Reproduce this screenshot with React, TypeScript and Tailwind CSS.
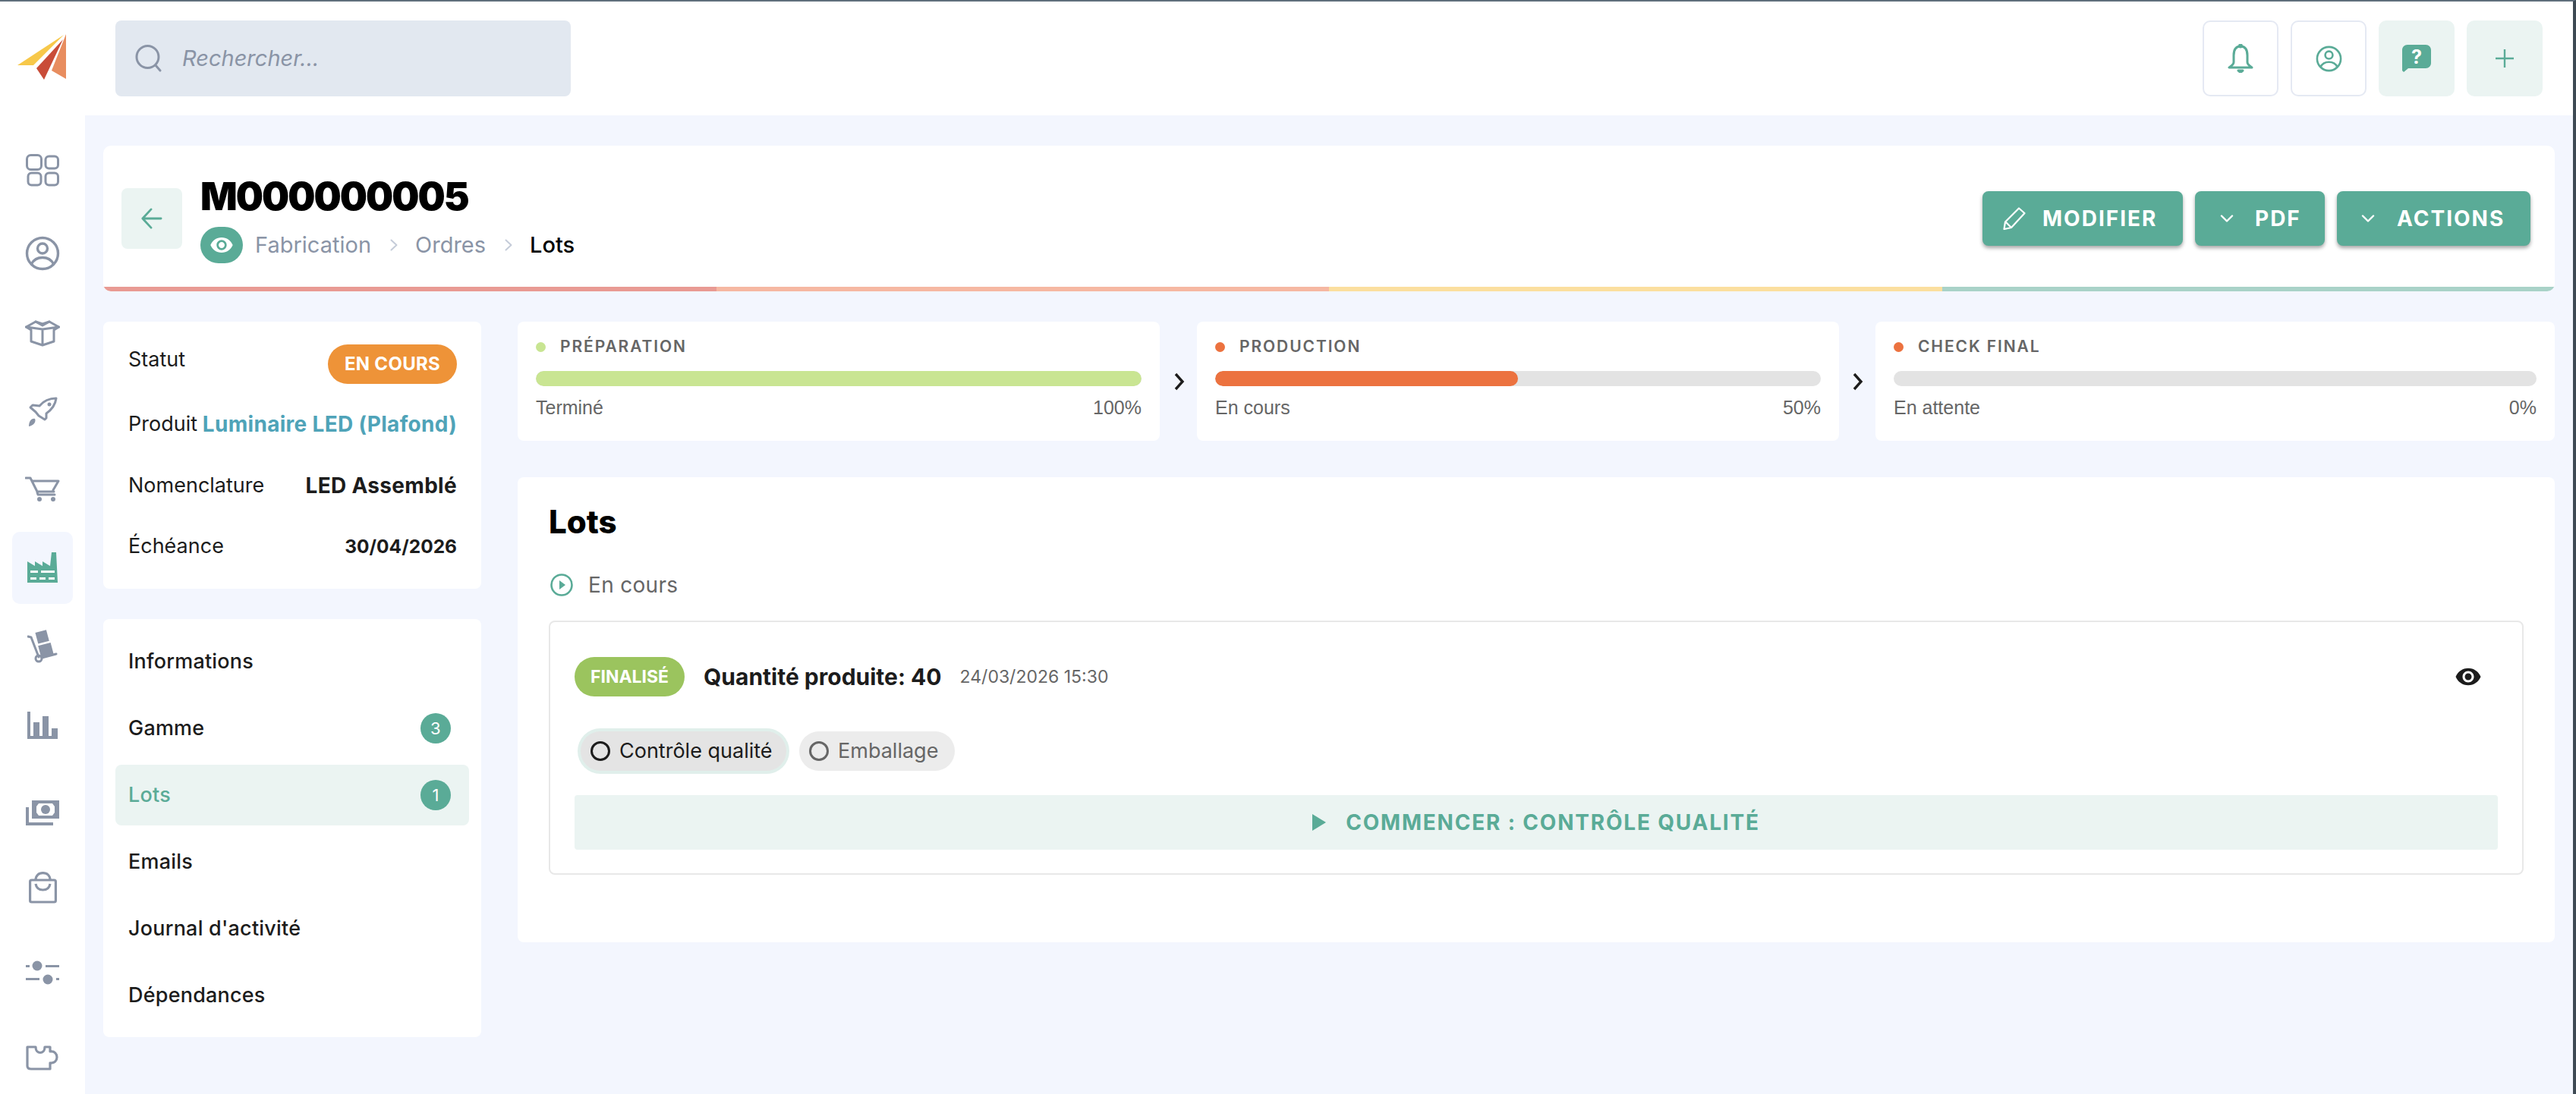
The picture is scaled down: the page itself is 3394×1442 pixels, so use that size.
import React from "react";

const INK = "#8a94a6";
const TEAL = "#5aab97";
const EYE = "M12 4.5C7 4.5 2.73 7.61 1 12c1.73 4.39 6 7.5 11 7.5s9.27-3.11 11-7.5c-1.73-4.39-6-7.5-11-7.5zM12 17c-2.76 0-5-2.24-5-5s2.24-5 5-5 5 2.24 5 5-2.24 5-5 5zm0-8c-1.66 0-3 1.34-3 3s1.34 3 3 3 3-1.34 3-3-1.34-3-3-3z";

function Logo() {
  return (
    <svg width="64" height="60" viewBox="0 0 64 60">
      <polygon points="61,1 0,41 21,41" fill="#f7c84a" />
      <polygon points="60,7 25,45 35,60 " fill="#c94c38" />
      <polygon points="64,0 64,59 45,48" fill="#e88d5f" />
    </svg>
  );
}
const stroke = { fill: "none", stroke: INK, strokeWidth: 3, strokeLinejoin: "round" as const, strokeLinecap: "round" as const };

function GridI() {
  return (
    <svg width="44" height="43" viewBox="0 0 44 43" {...stroke}>
      <rect x="1.5" y="1.5" width="19" height="19" rx="5" />
      <rect x="26" y="3" width="16.5" height="16" rx="4.5" />
      <rect x="3" y="25" width="17" height="16" rx="4.5" />
      <rect x="26" y="25" width="16.5" height="16" rx="4.5" />
    </svg>
  );
}
function UserI({ color = INK, size = 46 }: { color?: string; size?: number }) {
  return (
    <svg width={size} height={size} viewBox="0 0 46 46" fill="none" stroke={color} strokeWidth="3.4">
      <circle cx="23" cy="23" r="20.5" />
      <circle cx="23" cy="16.5" r="6.5" />
      <path d="M8.5 37c3-6 8.5-8.5 14.5-8.5S34.500 31 37.500 37" />
    </svg>
  );
}
function BoxI() {
  return (
    <svg width="46" height="36" viewBox="0 0 46 36" {...stroke}>
      <path d="M23 13 L1.500 10 L8 14 V29 L23 34 L38 29 V14 L44.500 10 L23 13 V34" />
      <path d="M1.500 10 L14 3 L23 6 L32 3 L44.500 10" />
      <path d="M14 3 L23 8 L32 3" />
    </svg>
  );
}
function RocketI() {
  return (
    <svg width="40" height="40" viewBox="0 0 40 40">
      <path d="M38 2 C28 2 21 6 16 12 L7 11 L4 14 L11 20 L15 25 L23 30 L25 28 L25 22 C32 17 37 10 38 2Z" fill="none" stroke={INK} strokeWidth="3" strokeLinejoin="round" />
      <circle cx="29" cy="10" r="2.500" fill={INK} />
      <path d="M2 39 C2 33 5 28 10 29 C12 33 8 38 2 39Z" fill={INK} />
    </svg>
  );
}
function CartI() {
  return (
    <svg width="46" height="34" viewBox="0 0 46 34">
      <path d="M1 2 H7 L16 20 H38 M10 6 H44 L37 18 M16 21 L17 24 H39" fill="none" stroke={INK} strokeWidth="3" strokeLinecap="round" strokeLinejoin="round" />
      <circle cx="19" cy="30" r="3" fill={INK} />
      <circle cx="37" cy="30" r="3" fill={INK} />
    </svg>
  );
}
function FactoryI() {
  return (
    <svg width="40" height="40" viewBox="0 0 40 40">
      <path d="M0 12 L10 18 V12 L20 18 V12 L30 18 L32 0 H38 L40 40 H0Z" fill={TEAL} />
      <path d="M4 24 H14 V27 H4Z M18 24 H28 V27 H18Z M28 24 H36 V27 H28Z M4 33 H12 V36 H4Z M16 33 H24 V36 H16Z M28 33 H36 V36 H28Z" fill="#fff" />
    </svg>
  );
}
function TruckI() {
  return (
    <svg width="40" height="44" viewBox="0 0 40 44">
      <g fill={INK}>
        <rect x="12" y="2" width="15" height="15" transform="rotate(-15 19 9)" />
        <rect x="16" y="19" width="17" height="16" transform="rotate(-15 24 27)" />
      </g>
      <path d="M1 9 L5 10 L15 36" fill="none" stroke={INK} strokeWidth="3" strokeLinecap="round" />
      <path d="M19 37 L38 32" fill="none" stroke={INK} strokeWidth="3" strokeLinecap="round" />
      <circle cx="15" cy="38" r="4" fill="none" stroke={INK} strokeWidth="3" />
    </svg>
  );
}
function BarsI() {
  return (
    <svg width="40" height="36" viewBox="0 0 40 36" fill={INK}>
      <path d="M0 0 H4 V32 H8 V14 H16 V32 H20 V6 H28 V32 H32 V22 H40 V36 H0Z" />
    </svg>
  );
}
function MoneyI() {
  return (
    <svg width="44" height="33" viewBox="0 0 44 33">
      <path fillRule="evenodd" d="M8 0 H44 V24 H8Z M14 8 L17 4 H35 L38 8 V16 L35 20 H17 L14 16Z" fill={INK} />
      <ellipse cx="26" cy="12" rx="6" ry="6" fill={INK} />
      <path d="M0 9 H4 V29 H36 V33 H0Z" fill={INK} />
    </svg>
  );
}
function BagI() {
  return (
    <svg width="37" height="42" viewBox="0 0 37 42" fill="none" stroke={INK} strokeWidth="3.200">
      <rect x="1.600" y="11" width="33.800" height="29" rx="2" />
      <path d="M9 11 C9 5 13 1.600 18.500 1.600 S28 5 28 11" />
      <path d="M9 16 C10 22 14 24 18.500 24 S27 22 28 16" />
    </svg>
  );
}
function SlidersI() {
  return (
    <svg width="44" height="32" viewBox="0 0 44 32" fill={INK}>
      <rect x="0" y="6" width="5" height="3" />
      <ellipse cx="15" cy="7" rx="6.500" ry="6.500" />
      <rect x="26" y="6" width="18" height="3" />
      <rect x="0" y="23" width="18" height="3" />
      <ellipse cx="29" cy="25" rx="6.500" ry="6.500" />
      <rect x="40" y="23" width="4" height="3" />
    </svg>
  );
}
function PuzzleI() {
  return (
    <svg width="44" height="33" viewBox="0 0 44 33" fill="none" stroke={INK} strokeWidth="3.200" strokeLinejoin="round">
      <path d="M2 2 H13 C13 12 25 12 25 2 H32 V8 C44 6 44 25 32 23 V31 H7 C3 31 2 29 2 27Z" />
    </svg>
  );
}
function Chev({ w = 18, h = 10, color = "#fff" }: { w?: number; h?: number; color?: string }) {
  return (
    <svg width={w} height={h} viewBox="0 0 18 10" fill="none" stroke={color} strokeWidth="2.400" strokeLinecap="round" strokeLinejoin="round">
      <path d="M2 1.500 L9 8.500 L16 1.500" />
    </svg>
  );
}
function Crumb() {
  return (
    <svg width="10" height="16" viewBox="0 0 10 16" fill="none" stroke="#c5ccd9" strokeWidth="2" strokeLinecap="round" strokeLinejoin="round">
      <path d="M1.500 1.500 L8.500 8 L1.500 14.500" />
    </svg>
  );
}
function StepChev() {
  return (
    <svg width="16" height="24" viewBox="0 0 16 24" fill="none" stroke="#1c1c1c" strokeWidth="3.400" strokeLinejoin="miter">
      <path d="M3 2 L12 12 L3 22" />
    </svg>
  );
}

function Step({ color, label, status, pct, fill, bar, cls }: { color: string; label: string; status: string; pct: string; fill: number; bar: string; cls: string }) {
  return (
    <div className={`${cls} h-[157px] bg-white rounded-[8px] px-[24px] pt-[22px]`}>
      <div className="flex items-center h-[22px]">
        <span className="w-[13px] h-[13px] rounded-full mr-[19px]" style={{ background: color }} />
        <span className="text-[21px] font-semibold tracking-[1.900px] text-[#666] leading-[22px]">{label}</span>
      </div>
      <div className="h-[20px] rounded-full bg-[#e3e3e3] mt-[21px] overflow-hidden">
        <div className="h-full rounded-full" style={{ width: `${fill}%`, background: bar }} />
      </div>
      <div className="flex justify-between mt-[14px] text-[25px] leading-[28px] text-[#666] font-[family-name:'Liberation_Sans',sans-serif]">
        <span>{status}</span>
        <span>{pct}</span>
      </div>
    </div>
  );
}

export default function App() {
  return (
    <div className="w-[3394px] h-[1442px] overflow-hidden bg-white border-t-[2px] border-r-[4px] border-t-[#5f6f7c] border-r-[#3e4a54] font-[family-name:Inter,sans-serif] text-[#1c1c1c] flex flex-col">
      <header className="h-[150px] flex items-center shrink-0">
        <div className="w-[112px] pl-[23px] pb-[4px] shrink-0"><Logo /></div>
        <div className="ml-[40px] w-[600px] h-[100px] bg-[#e2e8f0] rounded-[8px] flex items-center pl-[26px]">
          <svg width="36" height="36" viewBox="0 0 36 36" fill="none" stroke={INK} strokeWidth="3" strokeLinecap="round">
            <circle cx="16.500" cy="16" r="14.500" />
            <path d="M27 27 L33 34" />
          </svg>
          <span className="ml-[26px] text-[29px] italic text-[#8a94a6]">Rechercher...</span>
        </div>
        <div className="ml-auto mr-[40px] flex gap-[16px]">
          <div className="w-[100px] h-[100px] rounded-[10px] border-2 border-[#e5e9f3] flex items-center justify-center">
            <svg width="34" height="38" viewBox="0 0 34 38" fill="none" stroke={TEAL} strokeWidth="3" strokeLinejoin="round">
              <path d="M17 3 C10 3 8 9 8 15 V24 C8 27 5 29 2 31 H32 C29 29 26 27 26 24 V15 C26 9 24 3 17 3Z" />
              <circle cx="17" cy="2.500" r="1.500" fill={TEAL} />
              <path d="M14 35 H20 L17 37.500Z" fill={TEAL} />
            </svg>
          </div>
          <div className="w-[100px] h-[100px] rounded-[10px] border-2 border-[#e5e9f3] flex items-center justify-center">
            <UserI color={TEAL} size={35} />
          </div>
          <div className="w-[100px] h-[100px] rounded-[10px] bg-[#ebf4f2] flex items-center justify-center">
            <svg width="38" height="36" viewBox="0 0 38 36">
              <path d="M7 0 H31 C35 0 38 3 38 7 V24 C38 28 35 31 31 31 H8 L2 36 L0 34 V7 C0 3 3 0 7 0Z" fill={TEAL} />
              <text x="19" y="25" textAnchor="middle" fontSize="25" fontWeight="700" fill="#fff" fontFamily="Inter">?</text>
            </svg>
          </div>
          <div className="w-[100px] h-[100px] rounded-[10px] bg-[#ebf4f2] flex items-center justify-center">
            <svg width="26" height="26" viewBox="0 0 26 26" stroke={TEAL} strokeWidth="2.400"><path d="M13 1 V25 M1 13 H25" /></svg>
          </div>
        </div>
      </header>

      <div className="flex flex-1 min-h-0">
        <aside className="w-[112px] shrink-0 flex flex-col items-center">
          <div className="w-[80px] h-[96px] mt-[25px] flex items-center justify-center"><GridI /></div>
          <div className="w-[80px] h-[96px] mt-[14px] flex items-center justify-center"><UserI /></div>
          <div className="w-[80px] h-[96px] mt-[9px] flex items-center justify-center"><BoxI /></div>
          <div className="w-[80px] h-[96px] mt-[9px] flex items-center justify-center"><RocketI /></div>
          <div className="w-[80px] h-[96px] mt-[6px] flex items-center justify-center"><CartI /></div>
          <div className="w-[80px] h-[96px] mt-[8px] rounded-[10px] bg-[#f3f6fe] flex items-center justify-center"><FactoryI /></div>
          <div className="w-[80px] h-[96px] mt-[8px] flex items-center justify-center"><TruckI /></div>
          <div className="w-[80px] h-[96px] mt-[9px] flex items-center justify-center"><BarsI /></div>
          <div className="w-[80px] h-[96px] mt-[20px] flex items-center justify-center"><MoneyI /></div>
          <div className="w-[80px] h-[96px] mt-[3px] flex items-center justify-center"><BagI /></div>
          <div className="w-[80px] h-[96px] mt-[16px] flex items-center justify-center"><SlidersI /></div>
          <div className="w-[80px] h-[96px] mt-[17px] flex items-center justify-center"><PuzzleI /></div>
        </aside>

        <main className="flex-1 bg-[#f3f6fe] pt-[40px] px-[24px] min-w-0">
          <section className="h-[192px] bg-white rounded-[10px] overflow-hidden flex flex-col">
            <div className="flex-1 flex items-center pl-[24px] pr-[32px] pt-[6px]">
              <div className="w-[80px] h-[80px] rounded-[8px] bg-[#ebf4f2] flex items-center justify-center shrink-0">
                <svg width="28" height="28" viewBox="0 0 30 30" fill="none" stroke={TEAL} strokeWidth="3" strokeLinecap="round" strokeLinejoin="round">
                  <path d="M14 2 L2 15 L14 28 M2 15 H28" />
                </svg>
              </div>
              <div className="ml-[24px] flex flex-col">
                <h1 className="text-[51px] leading-[60px] font-black text-black tracking-[-2px]">M000000005</h1>
                <div className="flex items-center h-[48px] mt-[10px]">
                  <span className="w-[56px] h-[48px] rounded-full flex items-center justify-center" style={{ background: TEAL }}>
                    <svg width="32" height="32" viewBox="0 0 24 24" fill="#fff"><path d={EYE} /></svg>
                  </span>
                  <span className="ml-[16px] text-[29px] text-[#8a94a6]">Fabrication</span>
                  <span className="ml-[25px]"><Crumb /></span>
                  <span className="ml-[23px] text-[29px] text-[#8a94a6]">Ordres</span>
                  <span className="ml-[25px]"><Crumb /></span>
                  <span className="ml-[23px] text-[29px] font-medium text-black">Lots</span>
                </div>
              </div>
              <div className="ml-auto flex gap-[16px] text-white font-bold text-[28px] tracking-[2px]">
                <button className="w-[264px] h-[72px] rounded-[8px] bg-[#5aab97] shadow-[0_3px_5px_rgba(0,0,0,0.35)] flex items-center pl-[27px]">
                  <svg width="30" height="30" viewBox="0 0 30 30" fill="none" stroke="#fff" strokeWidth="2.200" strokeLinejoin="round">
                    <path d="M21 1.500 L28.500 8 L11 27 L1.500 29 L3 19.500Z M3.500 19.500 L10.500 26.500" />
                  </svg>
                  <span className="ml-[22px]">MODIFIER</span>
                </button>
                <button className="w-[171px] h-[72px] rounded-[8px] bg-[#5aab97] shadow-[0_3px_5px_rgba(0,0,0,0.35)] flex items-center pl-[33px]">
                  <Chev />
                  <span className="ml-[28px]">PDF</span>
                </button>
                <button className="w-[255px] h-[72px] rounded-[8px] bg-[#5aab97] shadow-[0_3px_5px_rgba(0,0,0,0.35)] flex items-center pl-[32px]">
                  <Chev />
                  <span className="ml-[29px]">ACTIONS</span>
                </button>
              </div>
            </div>
            <div className="h-[6px] flex shrink-0">
              <div className="flex-1 bg-[#e99a93]" />
              <div className="flex-1 bg-[#f6b8a2]" />
              <div className="flex-1 bg-[#fbdf9f]" />
              <div className="flex-1 bg-[#a9d2c8]" />
            </div>
          </section>

          <div className="flex mt-[40px] gap-[48px]">
            <div className="w-[498px] shrink-0 flex flex-col gap-[40px]">
              <div className="h-[352px] bg-white rounded-[8px] pt-[30px] pl-[33px] pr-[32px] text-[27px]">
                <div className="flex justify-between items-start h-[52px]">
                  <span className="leading-[40px]">Statut</span>
                  <span className="w-[170px] h-[52px] rounded-full bg-[#ee9338] text-white font-bold text-[24px] tracking-[0.300px] flex items-center justify-center">EN COURS</span>
                </div>
                <div className="flex justify-between items-center h-[40px] mt-[33px] whitespace-nowrap">
                  <span>Produit</span>
                  <span className="font-bold text-[#4fa3b8] text-[28px] tracking-[0.300px]">Luminaire LED (Plafond)</span>
                </div>
                <div className="flex justify-between items-center h-[40px] mt-[41px]">
                  <span>Nomenclature</span>
                  <span className="font-bold text-[28px] tracking-[0.300px]">LED Assemblé</span>
                </div>
                <div className="flex justify-between items-center h-[40px] mt-[40px]">
                  <span>Échéance</span>
                  <span className="font-bold text-[24.500px]">30/04/2026</span>
                </div>
              </div>

              <nav className="h-[551px] bg-white rounded-[8px] px-[16px] pt-[16px] text-[27px] tracking-[0.200px] font-medium flex flex-col gap-[8px]">
                <div className="h-[80px] shrink-0 px-[17px] flex items-center">Informations</div>
                <div className="h-[80px] shrink-0 px-[17px] flex items-center justify-between pr-[24px]">
                  <span>Gamme</span>
                  <span className="w-[40px] h-[40px] rounded-full bg-[#5aab97] text-white text-[22px] font-normal flex items-center justify-center">3</span>
                </div>
                <div className="h-[80px] shrink-0 px-[17px] flex items-center justify-between pr-[24px] rounded-[8px] bg-[#ebf4f2] text-[#5aab97]">
                  <span>Lots</span>
                  <span className="w-[40px] h-[40px] rounded-full bg-[#5aab97] text-white text-[22px] font-normal flex items-center justify-center">1</span>
                </div>
                <div className="h-[80px] shrink-0 px-[17px] flex items-center">Emails</div>
                <div className="h-[80px] shrink-0 px-[17px] flex items-center">Journal d'activité</div>
                <div className="h-[80px] shrink-0 px-[17px] flex items-center">Dépendances</div>
              </nav>
            </div>

            <div className="flex-1 min-w-0 flex flex-col gap-[48px]">
              <div className="flex items-center">
                <Step cls="w-[846px]" color="#c8e592" label="PRÉPARATION" status="Terminé" pct="100%" fill={100} bar="#c9e592" />
                <div className="w-[49px] pl-[2px] flex justify-center"><StepChev /></div>
                <Step cls="w-[846px]" color="#ec723f" label="PRODUCTION" status="En cours" pct="50%" fill={50} bar="#ec723f" />
                <div className="w-[48px] pl-[2px] flex justify-center"><StepChev /></div>
                <Step cls="flex-1" color="#ec723f" label="CHECK FINAL" status="En attente" pct="0%" fill={0} bar="#ec723f" />
              </div>

              <section className="h-[613px] bg-white rounded-[8px] pt-[35px] pl-[41px] pr-[41px]">
                <h2 className="text-[42px] leading-[48px] font-extrabold text-black">Lots</h2>
                <div className="flex items-center mt-[43px] h-[32px] pl-[2px]">
                  <svg width="30" height="30" viewBox="0 0 30 30">
                    <circle cx="15" cy="15" r="13.500" fill="none" stroke={TEAL} strokeWidth="2.600" />
                    <path d="M12 9 L20 15 L12 21Z" fill={TEAL} />
                  </svg>
                  <span className="ml-[20px] text-[28px] tracking-[0.300px] text-[#666]">En cours</span>
                </div>
                <div className="mt-[31px] h-[335px] rounded-[8px] border-2 border-[#e8e8e8] pt-[46px] px-[32px]">
                  <div className="flex items-center h-[52px]">
                    <span className="w-[145px] h-[52px] rounded-full bg-[#9bc45e] text-white font-bold text-[23px] flex items-center justify-center">FINALISÉ</span>
                    <span className="ml-[25px] text-[30px] font-bold">Quantité produite: 40</span>
                    <span className="ml-[24px] text-[23px] text-[#666]">24/03/2026 15:30</span>
                    <svg className="ml-auto mr-[21px]" width="36" height="36" viewBox="0 0 24 24" fill="#1c1c1c"><path d={EYE} /></svg>
                  </div>
                  <div className="flex items-center gap-[17px] mt-[46px] ml-[8px] text-[27px]">
                    <span className="w-[271px] h-[52px] pl-[13px] rounded-full bg-[#e4e4e4] ring-4 ring-[#e0efeb] flex items-center">
                      <span className="w-[26px] h-[26px] rounded-full border-[3px] border-[#1c1c1c]" />
                      <span className="ml-[12px]">Contrôle qualité</span>
                    </span>
                    <span className="w-[205px] h-[52px] pl-[13px] rounded-full bg-[#ececec] text-[#666] flex items-center">
                      <span className="w-[26px] h-[26px] rounded-full border-[3px] border-[#666]" />
                      <span className="ml-[12px]">Emballage</span>
                    </span>
                  </div>
                  <button className="mt-[32px] w-full h-[72px] rounded-[4px] bg-[#ebf4f2] flex items-center justify-center text-[#5aab97] font-bold text-[28px] tracking-[1.800px]">
                    <svg width="18" height="22" viewBox="0 0 18 22" fill={TEAL}><path d="M0 0 L18 11 L0 22Z" /></svg>
                    <span className="ml-[26px]">COMMENCER : CONTRÔLE QUALITÉ</span>
                  </button>
                </div>
              </section>
            </div>
          </div>
        </main>
      </div>
    </div>
  );
}
